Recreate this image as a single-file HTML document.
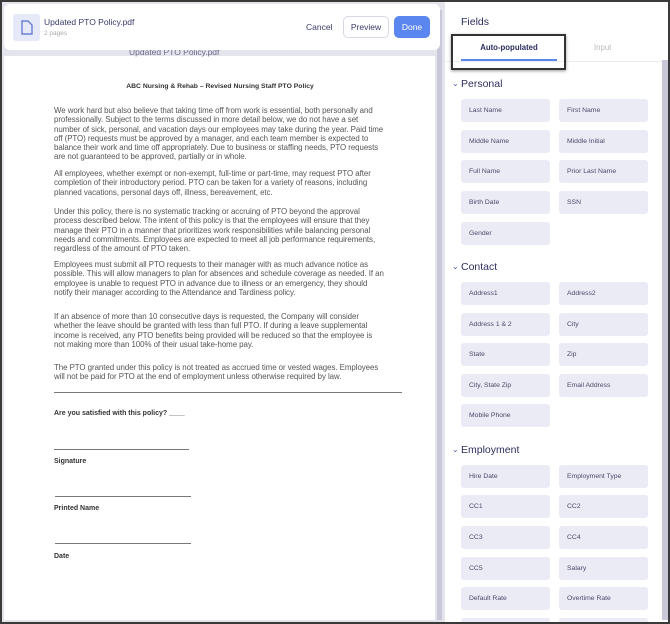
<!DOCTYPE html>
<html><head><meta charset="utf-8"><style>
*{margin:0;padding:0;box-sizing:border-box}
html{width:670px;height:624px;overflow:hidden}
body{width:670px;height:624px;overflow:hidden;font-family:"Liberation Sans",sans-serif;background:#fff;position:relative}
.frame{position:absolute;left:0;top:0;width:670px;height:624px;border:2px solid #3a3a3a;z-index:50;pointer-events:none}
.left{position:absolute;left:0;top:0;width:445px;height:624px;background:#e4e4ec;overflow:hidden}
.hdr{position:absolute;left:4px;top:4px;width:436px;height:46px;background:#fff;border-radius:6px;z-index:3}
.doc{position:absolute;left:4px;top:56px;width:431px;height:564px;background:#fff}
.sb{position:absolute;left:437px;top:10px;width:5px;height:610px;background:#c8c8d8}
.p{position:absolute;left:54px;font-size:7.9px;line-height:9.3px;color:#555;white-space:nowrap;letter-spacing:-0.05px}
.b{position:absolute;left:54px;font-size:7px;color:#333;font-weight:bold}
.ln{position:absolute;height:1px;background:#777}
.right{position:absolute;left:445px;top:0;width:225px;height:624px;background:#fff}
.f{position:absolute;width:89px;height:23px;background:#ebebf5;border-radius:3px;font-size:6.8px;color:#4a4a6a;padding-left:8px;line-height:23px}
.sec{position:absolute;left:461px;font-size:10.5px;color:#2e2e5e}
.chev{position:absolute;left:452px;font-size:8px;color:#5060b0}
.clip{position:absolute;left:0;top:0;width:670px;height:624px;overflow:hidden}
</style></head><body>
<div class="clip">
<div class="left">
 <div class="hdr">
  <div style="position:absolute;left:9px;top:10px;width:27px;height:27px;background:#e6eaf8;border-radius:3px">
   <svg width="27" height="27" viewBox="0 0 27 27"><path d="M9 7h6l4 4v9H9z" fill="none" stroke="#6c7fd8" stroke-width="1.4"/></svg>
  </div>
  <div style="position:absolute;left:40px;top:13px;font-size:8.5px;color:#3a3a6a">Updated PTO Policy.pdf</div>
  <div style="position:absolute;left:40px;top:26px;font-size:6.5px;color:#aaa">2 pages</div>
  <div style="position:absolute;left:302px;top:18px;font-size:8.5px;color:#3a3a6a">Cancel</div>
  <div style="position:absolute;left:339px;top:12px;width:46px;height:22px;border:1px solid #d8d8e4;border-radius:5px;font-size:8.5px;color:#3a3a6a;text-align:center;line-height:20px">Preview</div>
  <div style="position:absolute;left:390px;top:12px;width:36px;height:22px;background:#5b86f0;border-radius:5px;font-size:8.5px;color:#fff;text-align:center;line-height:22px">Done</div>
 </div>
 <div style="position:absolute;left:129px;top:47px;font-size:8.5px;color:#6a6a8a;z-index:1">Updated PTO Policy.pdf</div>
 <div class="doc"></div>
 <div class="sb"></div>
 <div style="position:absolute;left:0;top:83px;width:440px;text-align:center;font-size:6.8px;font-weight:bold;color:#333">ABC Nursing &amp; Rehab – Revised Nursing Staff PTO Policy</div>
 <div class="p" style="top:106px">We work hard but also believe that taking time off from work is essential, both personally and<br>professionally. Subject to the terms discussed in more detail below, we do not have a set<br>number of sick, personal, and vacation days our employees may take during the year. Paid time<br>off (PTO) requests must be approved by a manager, and each team member is expected to<br>balance their work and time off appropriately. Due to business or staffing needs, PTO requests<br>are not guaranteed to be approved, partially or in whole.</div>
 <div class="p" style="top:169px">All employees, whether exempt or non-exempt, full-time or part-time, may request PTO after<br>completion of their introductory period. PTO can be taken for a variety of reasons, including<br>planned vacations, personal days off, illness, bereavement, etc.</div>
 <div class="p" style="top:207px">Under this policy, there is no systematic tracking or accruing of PTO beyond the approval<br>process described below. The intent of this policy is that the employees will ensure that they<br>manage their PTO in a manner that prioritizes work responsibilities while balancing personal<br>needs and commitments. Employees are expected to meet all job performance requirements,<br>regardless of the amount of PTO taken.</div>
 <div class="p" style="top:260px">Employees must submit all PTO requests to their manager with as much advance notice as<br>possible. This will allow managers to plan for absences and schedule coverage as needed. If an<br>employee is unable to request PTO in advance due to illness or an emergency, they should<br>notify their manager according to the Attendance and Tardiness policy.</div>
 <div class="p" style="top:312px">If an absence of more than 10 consecutive days is requested, the Company will consider<br>whether the leave should be granted with less than full PTO. If during a leave supplemental<br>income is received, any PTO benefits being provided will be reduced so that the employee is<br>not making more than 100% of their usual take-home pay.</div>
 <div class="p" style="top:363px">The PTO granted under this policy is not treated as accrued time or vested wages. Employees<br>will not be paid for PTO at the end of employment unless otherwise required by law.</div>
 <div class="ln" style="left:54px;top:392px;width:348px"></div>
 <div class="b" style="top:410px">Are you satisfied with this policy? ____</div>
 <div class="ln" style="left:54px;top:449px;width:135px"></div>
 <div class="b" style="top:458px">Signature</div>
 <div class="ln" style="left:55px;top:496px;width:136px"></div>
 <div class="b" style="top:505px">Printed Name</div>
 <div class="ln" style="left:55px;top:543px;width:136px"></div>
 <div class="b" style="top:553px">Date</div>
</div>
<div class="right">
 <div style="position:absolute;left:16px;top:16px;font-size:10.5px;color:#2e2e5e">Fields</div>
 <div style="position:absolute;left:0;top:61px;width:220px;height:1px;background:#ececf2"></div>
 <div style="position:absolute;left:16px;top:59px;width:96px;height:2px;background:#5b86f0"></div>
 <div style="position:absolute;left:6px;top:34px;width:115px;height:36px;border:2px solid #333;box-shadow:0 1px 3px rgba(0,0,0,.4)"></div>
 <div style="position:absolute;left:16px;top:43px;width:96px;text-align:center;font-size:7.8px;font-weight:bold;color:#2e2e5e">Auto-populated</div>
 <div style="position:absolute;left:149px;top:43px;font-size:7.8px;color:#bbb">Input</div>
 <div style="position:absolute;left:217px;top:60px;width:6px;height:560px;background:#c8c8d8"></div>
</div>
<div class="chev" style="top:79px">&#8964;</div><div class="sec" style="top:78px">Personal</div>
<div class="f" style="left:461px;top:99px">Last Name</div><div class="f" style="left:559px;top:99px">First Name</div>
<div class="f" style="left:461px;top:130px">Middle Name</div><div class="f" style="left:559px;top:130px">Middle Initial</div>
<div class="f" style="left:461px;top:160px">Full Name</div><div class="f" style="left:559px;top:160px">Prior Last Name</div>
<div class="f" style="left:461px;top:191px">Birth Date</div><div class="f" style="left:559px;top:191px">SSN</div>
<div class="f" style="left:461px;top:222px">Gender</div>
<div class="chev" style="top:262px">&#8964;</div><div class="sec" style="top:261px">Contact</div>
<div class="f" style="left:461px;top:282px">Address1</div><div class="f" style="left:559px;top:282px">Address2</div>
<div class="f" style="left:461px;top:313px">Address 1 &amp; 2</div><div class="f" style="left:559px;top:313px">City</div>
<div class="f" style="left:461px;top:343px">State</div><div class="f" style="left:559px;top:343px">Zip</div>
<div class="f" style="left:461px;top:374px">City, State Zip</div><div class="f" style="left:559px;top:374px">Email Address</div>
<div class="f" style="left:461px;top:404px">Mobile Phone</div>
<div class="chev" style="top:445px">&#8964;</div><div class="sec" style="top:444px">Employment</div>
<div class="f" style="left:461px;top:465px">Hire Date</div><div class="f" style="left:559px;top:465px">Employment Type</div>
<div class="f" style="left:461px;top:495px">CC1</div><div class="f" style="left:559px;top:495px">CC2</div>
<div class="f" style="left:461px;top:526px">CC3</div><div class="f" style="left:559px;top:526px">CC4</div>
<div class="f" style="left:461px;top:557px">CC5</div><div class="f" style="left:559px;top:557px">Salary</div>
<div class="f" style="left:461px;top:587px">Default Rate</div><div class="f" style="left:559px;top:587px">Overtime Rate</div>
<div class="f" style="left:461px;top:618px;height:6px"></div><div class="f" style="left:559px;top:618px;height:6px"></div>
</div>
<div class="frame"></div>
</body></html>
